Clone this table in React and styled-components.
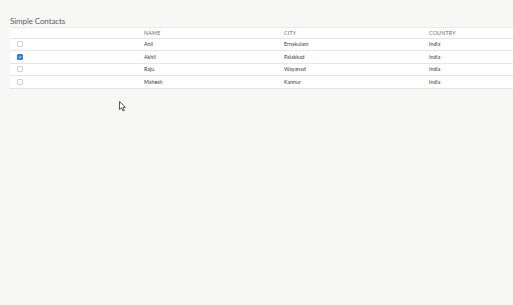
import { createGlobalStyle } from 'styled-components'
import styled from 'styled-components'

const GlobalStyle = createGlobalStyle`
    html, body {
        margin: 0;
        padding: 0;
        background: #f7f7f5;
        font-family: Lato, "Open Sans", "Liberation Sans", sans-serif;
    }
`

const Page = styled.div`
    position: relative;
    height: 305px;
    width: 513px;
    overflow: hidden;
    padding: 16px 0 0 10px;
    box-sizing: border-box;
    background: #f7f7f5;
`

const Title = styled.h1`
    margin: 0 0 1px 0;
    font-size: 8px;
    line-height: 10px;
    font-weight: 400;
    letter-spacing: -0.1px;
    color: #606068;
`

const Table = styled.div`
    width: 520px;
    background: #fff;
    border-top: 1px solid #ececec;
    border-bottom: 1px solid #e2e2e2;
`

const Row = styled.div`
    display: grid;
    grid-template-columns: 131px 140px 145px 1fr;
    align-items: center;
    height: ${(p) => (p.$header ? '9.5px' : '11.6px')};
    border-top: ${(p) => (p.$header ? 'none' : '1px solid #e6e6e6')};
`

const Cell = styled.div`
    padding-left: 3px;
    font-size: 5.3px;
    line-height: 6px;
    color: #3a3a3e;
    white-space: nowrap;
`

const HeadCell = styled(Cell)`
    text-transform: uppercase;
    color: #68686c;
    letter-spacing: 0.2px;
`

const BoxCell = styled.div`
    padding-left: 7px;
    display: flex;
    align-items: center;
`

const Checkbox = styled.span`
    width: 4px;
    height: 4px;
    border-radius: 1px;
    border: 1px solid ${(p) => (p.$checked ? '#2f7fd8' : '#d2d2d2')};
    background: ${(p) => (p.$checked ? '#2f7fd8' : '#fff')};
    display: flex;
    align-items: center;
    justify-content: center;
`

const Cursor = styled.svg`
    position: absolute;
    left: 119px;
    top: 101px;
`

const contacts = [
    { name: 'Anil', city: 'Ernakulam', country: 'India', checked: false },
    { name: 'Akhil', city: 'Palakkad', country: 'India', checked: true },
    { name: 'Raju', city: 'Wayanad', country: 'India', checked: false },
    { name: 'Mahesh', city: 'Kannur', country: 'India', checked: false },
]

export default function App() {
    return (
        <>
            <GlobalStyle />
            <Page>
                <Title>Simple Contacts</Title>
                <Table>
                    <Row $header>
                        <BoxCell />
                        <HeadCell>Name</HeadCell>
                        <HeadCell>City</HeadCell>
                        <HeadCell>Country</HeadCell>
                    </Row>
                    {contacts.map((c) => (
                        <Row key={c.name}>
                            <BoxCell>
                                <Checkbox $checked={c.checked}>
                                    {c.checked && (
                                        <svg width="4" height="4" viewBox="0 0 4 4">
                                            <path d="M0.6 2.1 L1.6 3 L3.4 1" stroke="#fff" strokeWidth="0.8" fill="none" />
                                        </svg>
                                    )}
                                </Checkbox>
                            </BoxCell>
                            <Cell>{c.name}</Cell>
                            <Cell>{c.city}</Cell>
                            <Cell>{c.country}</Cell>
                        </Row>
                    ))}
                </Table>
                <Cursor width="8" height="12" viewBox="0 0 8 12">
                    <path d="M0.5 0.5 L0.5 8.5 L2.5 6.8 L4 10 L5.3 9.4 L3.9 6.3 L6.5 6.3 Z" fill="#fff" stroke="#333" strokeWidth="0.8" strokeLinejoin="round" />
                </Cursor>
            </Page>
        </>
    )
}
